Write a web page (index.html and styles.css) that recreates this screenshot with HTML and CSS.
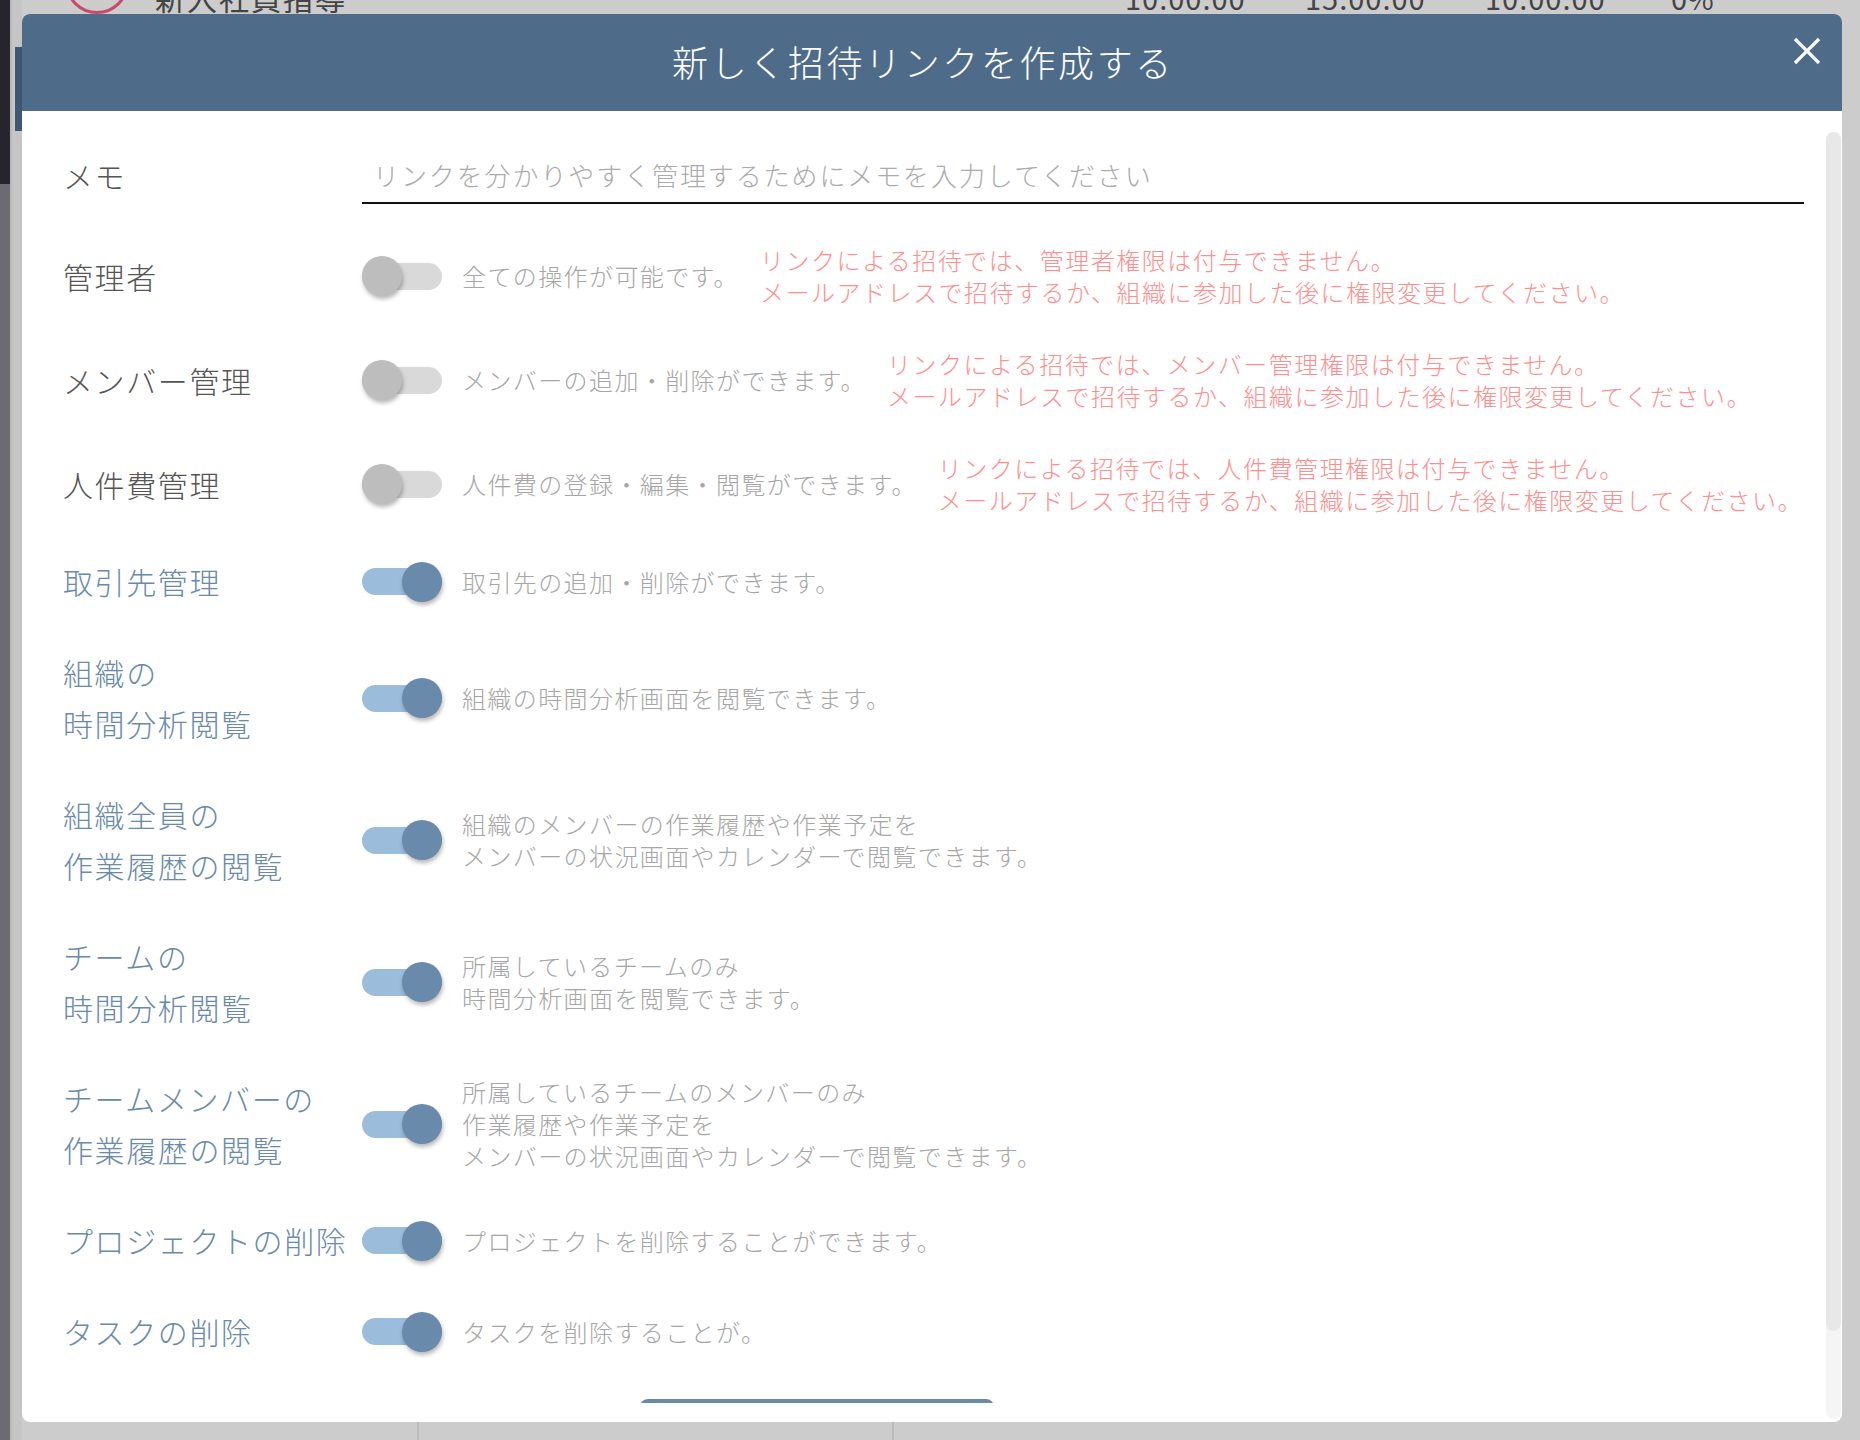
FILE: index.html
```html
<!DOCTYPE html>
<html lang="ja">
<head>
    <meta charset="UTF-8">
    <meta name="viewport" content="width=device-width, initial-scale=1.0">
    <title>新しく招待リンクを作成する</title>
    <link rel="stylesheet" href="styles.css">
</head>
<body>

<!-- 背景のページ（モーダルの下） -->
<div class="page">
    <div class="side">
        <div class="side-dark"></div>
        <div class="side-edge"><div class="side-tab"></div></div>
    </div>
    <div class="main">
        <div class="task-row">
            <span class="task-icon"></span>
            <span class="task-name">新入社員指導</span>
            <span class="task-time t1">10:00:00</span>
            <span class="task-time">15:00:00</span>
            <span class="task-time">10:00:00</span>
            <span class="task-rate">0%</span>
        </div>
        <div class="table-body"></div>
        <div class="table-foot">
            <div class="foot-cell c1"></div>
            <div class="foot-cell c2"></div>
            <div class="foot-cell"></div>
        </div>
    </div>
</div>

<div class="modal">
    <div class="modal-header">
        <h1 class="modal-title">新しく招待リンクを作成する</h1>
        <button class="close-btn" aria-label="閉じる">
            <svg width="30" height="30" viewBox="0 0 30 30">
                <path d="M3 3 L27 27 M27 3 L3 27" stroke="#fff" stroke-width="3.2" fill="none"/>
            </svg>
        </button>
    </div>

    <div class="modal-body">
        <div class="modal-content">

            <div class="row">
                <div class="row-label">メモ</div>
                <input class="memo-input" type="text" placeholder="リンクを分かりやすく管理するためにメモを入力してください">
            </div>

            <div class="row">
                <div class="row-label">管理者</div>
                <div class="switch"><span class="knob"></span></div>
                <div class="desc">全ての操作が可能です。</div>
                <div class="note">リンクによる招待では、管理者権限は付与できません。<br>メールアドレスで招待するか、組織に参加した後に権限変更してください。</div>
            </div>

            <div class="row">
                <div class="row-label">メンバー管理</div>
                <div class="switch"><span class="knob"></span></div>
                <div class="desc">メンバーの追加・削除ができます。</div>
                <div class="note">リンクによる招待では、メンバー管理権限は付与できません。<br>メールアドレスで招待するか、組織に参加した後に権限変更してください。</div>
            </div>

            <div class="row">
                <div class="row-label">人件費管理</div>
                <div class="switch"><span class="knob"></span></div>
                <div class="desc">人件費の登録・編集・閲覧ができます。</div>
                <div class="note">リンクによる招待では、人件費管理権限は付与できません。<br>メールアドレスで招待するか、組織に参加した後に権限変更してください。</div>
            </div>

            <div class="row">
                <div class="row-label on">取引先管理</div>
                <div class="switch on"><span class="knob"></span></div>
                <div class="desc">取引先の追加・削除ができます。</div>
            </div>

            <div class="row">
                <div class="row-label on">組織の<br>時間分析閲覧</div>
                <div class="switch on"><span class="knob"></span></div>
                <div class="desc">組織の時間分析画面を閲覧できます。</div>
            </div>

            <div class="row">
                <div class="row-label on">組織全員の<br>作業履歴の閲覧</div>
                <div class="switch on"><span class="knob"></span></div>
                <div class="desc">組織のメンバーの作業履歴や作業予定を<br>メンバーの状況画面やカレンダーで閲覧できます。</div>
            </div>

            <div class="row">
                <div class="row-label on">チームの<br>時間分析閲覧</div>
                <div class="switch on"><span class="knob"></span></div>
                <div class="desc">所属しているチームのみ<br>時間分析画面を閲覧できます。</div>
            </div>

            <div class="row">
                <div class="row-label on">チームメンバーの<br>作業履歴の閲覧</div>
                <div class="switch on"><span class="knob"></span></div>
                <div class="desc">所属しているチームのメンバーのみ<br>作業履歴や作業予定を<br>メンバーの状況画面やカレンダーで閲覧できます。</div>
            </div>

            <div class="row">
                <div class="row-label on">プロジェクトの削除</div>
                <div class="switch on"><span class="knob"></span></div>
                <div class="desc">プロジェクトを削除することができます。</div>
            </div>

            <div class="row">
                <div class="row-label on">タスクの削除</div>
                <div class="switch on"><span class="knob"></span></div>
                <div class="desc">タスクを削除することが。</div>
            </div>

            <button class="create-btn">作成する</button>
        </div>

        <div class="scrollbar"><div class="thumb"></div></div>
    </div>
</div>

</body>
</html>
```

FILE: styles.css
```css
html, body {
    margin: 0;
    padding: 0;
}
body {
    width: 1860px;
    height: 1440px;
    overflow: hidden;
    background-color: #cccccc;
    font-family: "Noto Sans CJK JP", "Noto Sans", sans-serif;
    color: #555;
}

/* 背景ページ（オーバーレイで暗くなっている） */
.page {
    display: flex;
    height: 1440px;
}
.side {
    display: flex;
    flex: none;
}
.side-dark {
    width: 10px;
    background: linear-gradient(#26252d 0 184px, #6c6b71 184px);
}
.side-edge {
    width: 12px;
    background-color: #c5c5c5;
    border-left: 2px solid #b9b9b9;
    box-sizing: border-box;
    padding-top: 47px;
}
.side-tab {
    margin-left: 3px;
    height: 84px;
    background-color: #3e5773;
}
.main {
    flex: 1;
    display: flex;
    flex-direction: column;
}
.task-row {
    display: flex;
    align-items: center;
    height: 60px;
    margin-top: -33px;
    font-size: 30px;
    color: #444;
}
.task-icon {
    width: 64px;
    height: 64px;
    margin-left: 43px;
    margin-top: -30px;
    border: 3px solid #c9496d;
    border-radius: 50%;
    box-sizing: border-box;
}
.task-name {
    margin-left: 26px;
    letter-spacing: 2px;
}
.task-time {
    width: 180px;
    font-size: 29px;
    letter-spacing: 1px;
}
.task-time.t1 {
    margin-left: 778px;
}
.task-rate {
    margin-left: 6px;
    font-size: 29px;
}
.table-body {
    flex: 1;
}
.table-foot {
    display: flex;
    height: 20px;
}
.foot-cell {
    height: 20px;
}
.foot-cell.c1 {
    width: 395px;
    border-right: 2px solid #bbbbbb;
}
.foot-cell.c2 {
    width: 473px;
    border-right: 2px solid #bbbbbb;
}

/* モーダル */
.modal {
    position: fixed;
    top: 14px;
    left: 22px;
    width: 1820px;
    height: 1408px;
    background-color: #fff;
    border-radius: 8px;
    overflow: hidden;
    display: flex;
    flex-direction: column;
}
.modal-header {
    position: relative;
    flex: none;
    height: 97px;
    box-sizing: border-box;
    padding: 0 18px 4px 0;
    background-color: #4e6c8a;
    display: flex;
    align-items: center;
    justify-content: center;
}
.modal-title {
    margin: 0;
    font-size: 36px;
    font-weight: 300;
    letter-spacing: 2.6px;
    color: #fff;
}
.close-btn {
    position: absolute;
    top: 22px;
    right: 20px;
    width: 30px;
    height: 30px;
    padding: 0;
    border: none;
    background: none;
    cursor: pointer;
}
.close-btn svg {
    display: block;
}

.modal-body {
    flex: 1;
    display: flex;
    min-height: 0;
}
.modal-content {
    flex: 1;
    margin-bottom: 19px;
    padding: 15px 22px 0 41px;
    overflow: hidden;
}

.row {
    display: flex;
    align-items: center;
    padding: 20px 0;
}
.row-label {
    flex: none;
    width: 299px;
    font-size: 30px;
    font-weight: 300;
    line-height: 51px;
    letter-spacing: 1.6px;
    color: #555;
    white-space: nowrap;
}
.row-label.on {
    color: #6a8aab;
}

.memo-input {
    flex: 1;
    height: 58px;
    box-sizing: border-box;
    padding: 0 11px;
    border: none;
    border-bottom: 2px solid #111;
    outline: none;
    font-family: inherit;
    font-size: 26px;
    letter-spacing: 1.9px;
    color: #444;
}
.memo-input::placeholder {
    color: #ababab;
    font-weight: 300;
}

/* トグルスイッチ */
.switch {
    flex: none;
    display: flex;
    align-items: center;
    justify-content: flex-start;
    width: 80px;
    height: 27px;
    border-radius: 14px;
    background-color: #d9d9d9;
}
.switch .knob {
    flex: none;
    width: 40px;
    height: 40px;
    border-radius: 50%;
    background-color: #bdbdbd;
    box-shadow: 1px 3px 4px rgba(0, 0, 0, 0.28);
}
.switch.on {
    justify-content: flex-end;
    background-color: #9cbcdc;
}
.switch.on .knob {
    background-color: #6a8aab;
}

.desc {
    flex: none;
    margin-left: 20px;
    font-size: 24px;
    font-weight: 300;
    line-height: 32px;
    letter-spacing: 1.4px;
    color: #a6a6a6;
    white-space: nowrap;
}
.note {
    flex: none;
    margin-left: 21px;
    font-size: 24px;
    font-weight: 300;
    line-height: 32px;
    letter-spacing: 1.5px;
    color: #ff8e8e;
    white-space: nowrap;
}

.create-btn {
    display: block;
    margin: 22px 0 0 577px;
    width: 354px;
    height: 60px;
    border: none;
    border-radius: 8px;
    background-color: #6a8aab;
    color: #fff;
    font-family: inherit;
    font-size: 24px;
}

/* スクロールバー */
.scrollbar {
    flex: none;
    width: 15px;
    margin: 21px 1px 3px 0;
    border-radius: 8px;
    background-color: #f5f5f5;
}
.scrollbar .thumb {
    height: 1199px;
    border-radius: 8px;
    background-color: #e8e8e8;
}
```
